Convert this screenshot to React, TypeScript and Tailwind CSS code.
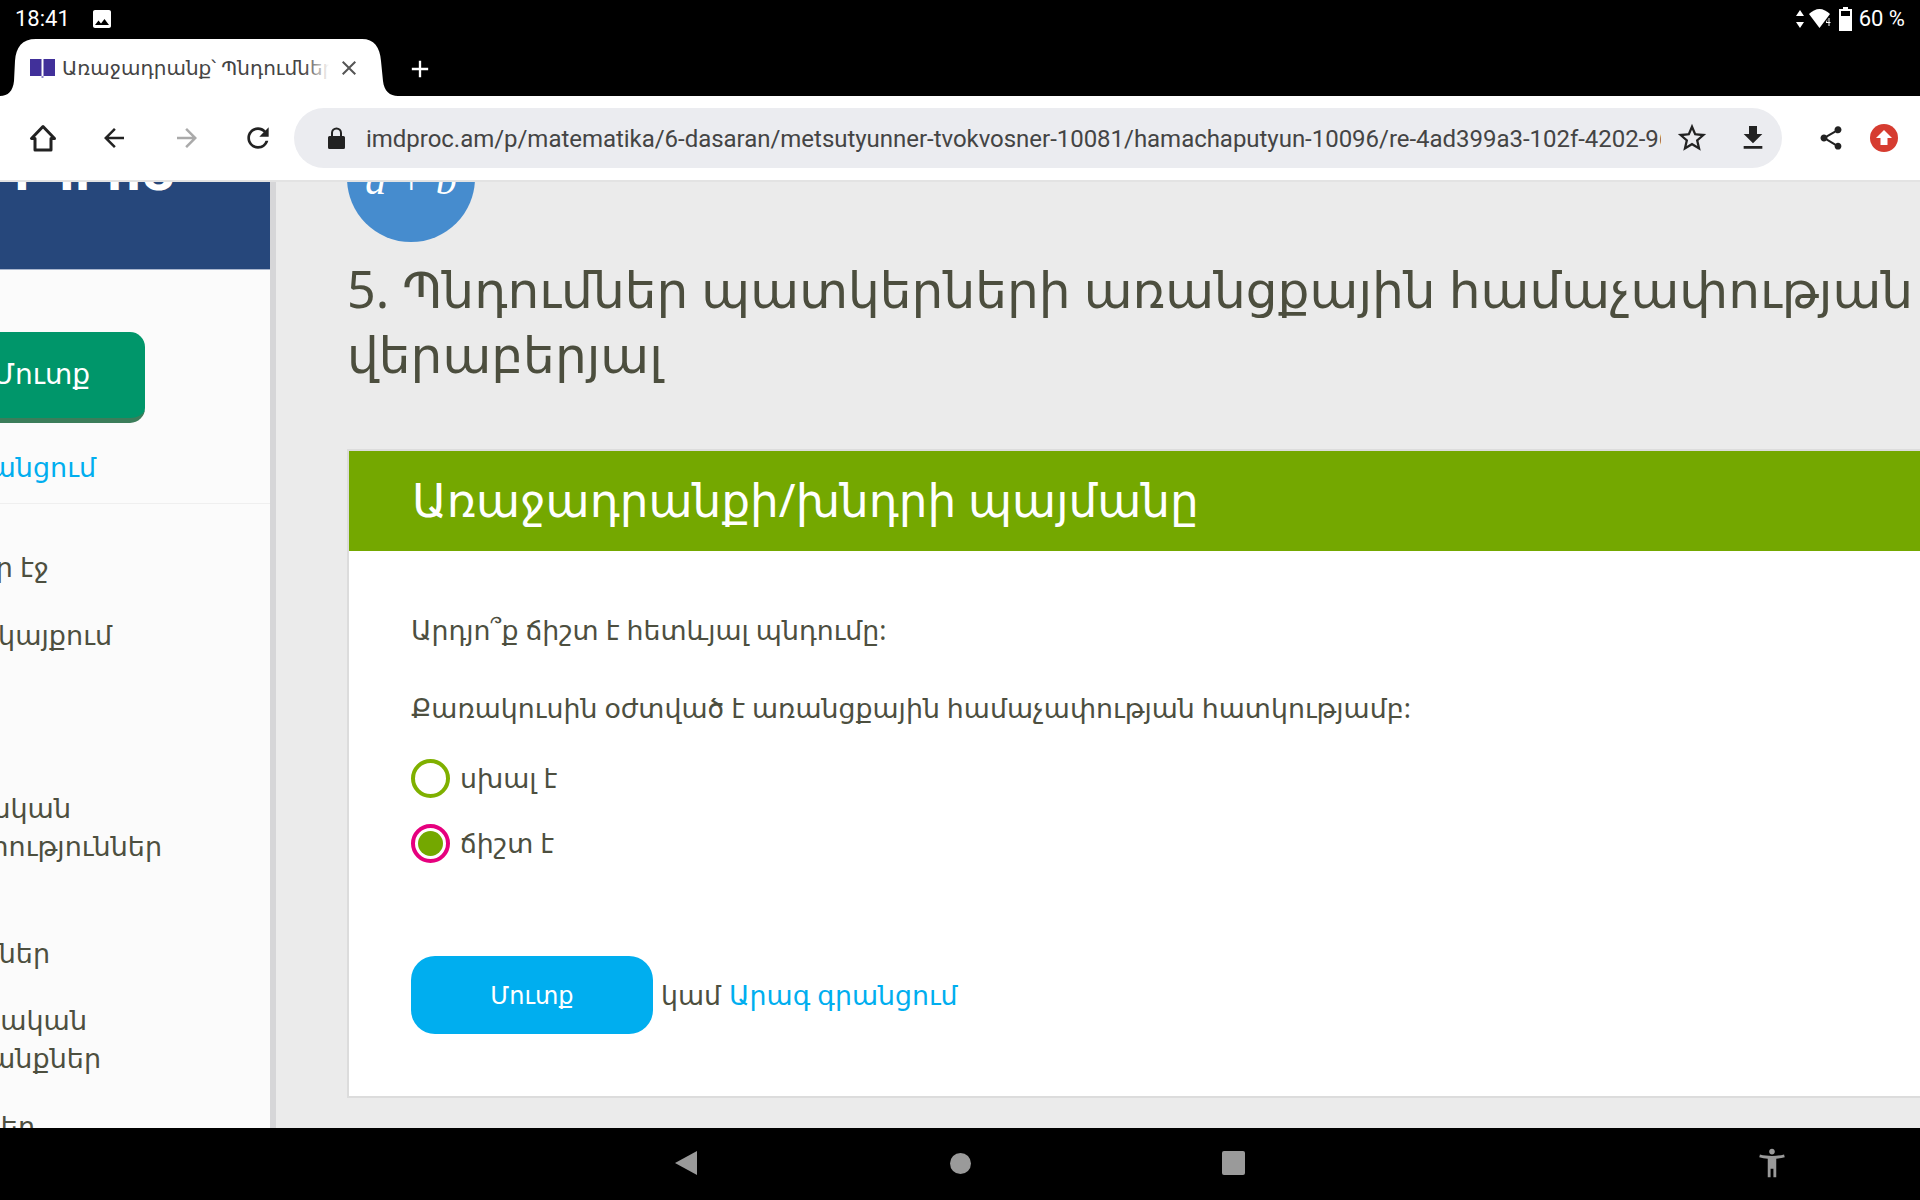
import {
  MdAdd,
  MdArrowBack,
  MdArrowForward,
  MdClose,
  MdFileDownload,
  MdImage,
  MdRefresh,
  MdShare,
  MdStarBorder,
  MdAccessibilityNew,
} from "react-icons/md";

const sideItems = [
  { text: "Գլխավոր էջ", cls: "mt-[44px] pr-[221px]" },
  { text: "Որոնում կայքում", cls: "mt-[30px] pr-[158px]" },
  { text: "Դասական", cls: "mt-[135px] pr-[199px]" },
  { text: "Մասնագիտություններ", cls: "pr-[108px]" },
  { text: "Դասընթացներ", cls: "mt-[69px] pr-[220px]" },
  { text: "Քաղաքական", cls: "mt-[29px] pr-[183px]" },
  { text: "աշխատանքներ", cls: "pr-[169px]" },
  { text: "Խնդիրներ", cls: "mt-[30px] pr-[235px]" },
];

const App = () => {
  return (
    <div className="flex h-screen w-screen flex-col overflow-hidden bg-black font-['Noto_Sans','DejaVu_Sans',sans-serif]">
      {/* status bar */}
      <div className="flex h-[39px] shrink-0 items-center justify-between pb-[2px] pl-[15px] pr-[15px] font-['Roboto',sans-serif] text-[22px] text-white">
        <div className="flex items-center gap-[20px]">
          <span>18:41</span>
          <MdImage className="size-[24px]" />
        </div>
        <div className="flex items-center">
          <svg width="10" height="20" viewBox="0 0 10 20" fill="white">
            <path d="M5 1l4 6H1zM5 19L1 13h8z" />
          </svg>
          <svg className="ml-[4px]" width="24" height="20" viewBox="0 0 24 20" fill="white">
            <path d="M0 5C3 2 7 0 10.500 0S18 2 21 5L10.500 19Z" />
            <path d="M18 13h1.500v-4h1v4h1v1h-1v3h-1v-3H17v-1l1.500-3z" fill="white" />
          </svg>
          <svg className="ml-[6px]" width="13" height="24" viewBox="0 0 13 24">
            <path d="M4 0h5v2h4v22H0V2h4z" fill="white" />
            <path d="M2 4h9v5H2z" fill="black" />
          </svg>
          <span className="ml-[7px]">60 %</span>
        </div>
      </div>

      {/* tabs */}
      <div className="flex h-[57px] shrink-0 items-start">
        <div className="relative flex h-[57px] w-[398px] items-center pl-[30px]">
          <svg className="absolute inset-0" width="398" height="57" viewBox="0 0 398 57" fill="white">
            <path d="M0 57C8 57 13 52 14 42L15 22C16 8 22 0 36 0H362C374 0 380 8 381 22L383 42C384 52 390 57 398 57Z" />
          </svg>
          <svg className="relative" width="25" height="20" viewBox="0 0 25 20">
            <path d="M0 1h11.500v17H0zM13.500 1H25v17H13.500z" fill="#41309a" />
            <path d="M11.500 18h2v2h-2z" fill="#8f86c8" />
          </svg>
          <div className="relative ml-[7px] w-[267px] overflow-hidden whitespace-nowrap text-[20px] text-[#444]">
            Առաջադրանք՝ Պնդումներ պատկերների
            <div className="absolute inset-y-0 right-0 w-[24px] bg-gradient-to-r from-transparent to-white" />
          </div>
          <MdClose className="relative ml-[8px] size-[24px] text-[#555]" />
        </div>
        <MdAdd className="ml-[8px] mt-[16px] size-[28px] text-white" />
      </div>

      {/* toolbar */}
      <div className="flex h-[84px] shrink-0 items-center bg-white pl-[7px] text-[#222]">
        <div className="flex w-[72px] justify-center">
          <svg width="28" height="28" viewBox="0 0 28 28" fill="none" stroke="#222" strokeWidth="3" strokeLinejoin="round">
            <path d="M14 2.500L2.500 14.500H6V26h16V14.500h3.500Z" />
          </svg>
        </div>
        <div className="-ml-px flex w-[72px] justify-center">
          <MdArrowBack className="size-[30px]" />
        </div>
        <div className="ml-px flex w-[72px] justify-center">
          <MdArrowForward className="size-[30px] text-[#aaa]" />
        </div>
        <div className="-ml-px flex w-[72px] justify-center">
          <MdRefresh className="size-[32px]" />
        </div>
        <div className="flex h-[60px] w-[1488px] items-center rounded-full bg-[#ebecf0] pl-[34px]">
          <svg width="17" height="22" viewBox="0 0 17 22" fill="#222">
            <path d="M3 9V6a5.500 5.500 0 0 1 11 0v3h1.500A1.500 1.500 0 0 1 17 10.500V20.500A1.500 1.500 0 0 1 15.500 22H1.500A1.500 1.500 0 0 1 0 20.500V10.500A1.500 1.500 0 0 1 1.500 9ZM5 9h7V6a3.500 3.500 0 0 0-7 0Z" />
          </svg>
          <div className="ml-[21px] w-[1295px] overflow-hidden whitespace-nowrap pt-[2px] font-['Roboto',sans-serif] text-[24px] tracking-[-0.03px] text-[#444]">
            imdproc.am/p/matematika/6-dasaran/metsutyunner-tvokvosner-10081/hamachaputyun-10096/re-4ad399a3-102f-4202-96c
          </div>
          <MdStarBorder className="ml-[14px] size-[34px]" />
          <MdFileDownload className="ml-[28px] size-[32px]" />
        </div>
        <MdShare className="ml-[35px] size-[28px]" />
        <svg className="ml-[25px]" width="28" height="28" viewBox="0 0 28 28">
          <circle cx="14" cy="14" r="14" fill="#d63c30" />
          <path d="M14 6l8 8h-4.500v7h-7v-7H6z" fill="white" />
        </svg>
      </div>

      {/* page */}
      <div className="flex h-[948px] shrink-0 overflow-hidden border-t-2 border-[#e3e3e3] bg-[#ebebeb]">
        <aside className="h-full w-[276px] shrink-0 overflow-hidden border-r-[6px] border-[#d6d6d8] bg-[#fbfbfb]">
          <div className="h-[88px] overflow-hidden border-b border-[#a9b6cd] bg-[#26477b]">
            <div className="-mt-[38px] -ml-[84px] whitespace-nowrap text-[48px] font-bold leading-[56px] text-white">
              ԻՄ ԴՊՐՈՑ
            </div>
          </div>
          <div className="-ml-[100px] mt-[62px] flex h-[91px] w-[245px] items-center justify-end rounded-[15px] border-b-[5px] border-[#3b7d5a] bg-[#00966a] pb-[4px] pr-[55px] text-[28px] text-white">
            Մուտք
          </div>
          <div className="mt-[26px] flex h-[55px] justify-end whitespace-nowrap border-b border-[#efefef] pr-[174px] text-[27px] leading-[36px] text-[#00aeef]">
            <span className="shrink-0">Արագ գրանցում</span>
          </div>
          <div className="whitespace-nowrap text-[27px] leading-[38px] text-[#4d4f3f]">
            {sideItems.map((item) => (
              <div key={item.text} className={`flex justify-end ${item.cls}`}>
                <span className="shrink-0">{item.text}</span>
              </div>
            ))}
          </div>
        </aside>

        <main className="min-w-0 flex-1 pl-[71px]">
          <div className="-mt-[68px] flex size-[128px] items-center justify-center rounded-full bg-[#468cce] pt-[4px] font-['Liberation_Serif',serif] text-[42px] italic text-white">
            a + b
          </div>
          <h1 className="mt-[14px] w-[1640px] text-[50.2px] font-normal leading-[65px] text-[#4c4e3e]">
            5. Պնդումներ պատկերների առանցքային համաչափության վերաբերյալ
          </h1>
          <section className="mt-[63px] h-[649px] w-[1700px] border-2 border-[#dcdcdc] bg-white">
            <div className="flex h-[100px] items-center bg-[#74a800] pb-[3px] pl-[63px] text-[45.3px] text-white">
              Առաջադրանքի/խնդրի պայմանը
            </div>
            <div className="pl-[62px] text-[26.8px] text-[#4d4f3f]">
              <p className="mt-[59px] leading-[40px]">Արդյո՞ք ճիշտ է հետևյալ պնդումը:</p>
              <p className="mt-[38px] leading-[40px]">Քառակուսին օժտված է առանցքային համաչափության հատկությամբ:</p>
              <div className="mt-[30px] flex items-center gap-[10px]">
                <span className="size-[39px] rounded-full border-[4px] border-[#7fb000] bg-white" />
                <span>սխալ է</span>
              </div>
              <div className="mt-[25px] flex items-center gap-[10px]">
                <span className="flex size-[39px] items-center justify-center rounded-full border-[4px] border-[#e6007e] bg-white">
                  <span className="size-[25px] rounded-full bg-[#74a800]" />
                </span>
                <span>ճիշտ է</span>
              </div>
              <div className="mt-[93px] flex items-center">
                <div className="flex h-[78px] w-[242px] items-center justify-center rounded-[24px] bg-[#00aeef] text-[24px] text-white">
                  Մուտք
                </div>
                <span className="ml-[8px]">կամ</span>
                <span className="ml-[8px] text-[#00aeef]">Արագ գրանցում</span>
              </div>
            </div>
          </section>
        </main>
      </div>

      {/* nav bar */}
      <div className="flex h-[70px] shrink-0 items-center pl-[675px] text-[#9a9a9a]">
        <svg width="22" height="24" viewBox="0 0 22 24" fill="#9a9a9a">
          <path d="M22 0v24L0 12z" />
        </svg>
        <span className="ml-[253px] size-[21px] rounded-full bg-[#9a9a9a]" />
        <span className="ml-[251px] h-[24px] w-[23px] rounded-[2px] bg-[#9a9a9a]" />
        <MdAccessibilityNew className="ml-[510px] size-[34px]" />
      </div>
    </div>
  );
};

export default App;
